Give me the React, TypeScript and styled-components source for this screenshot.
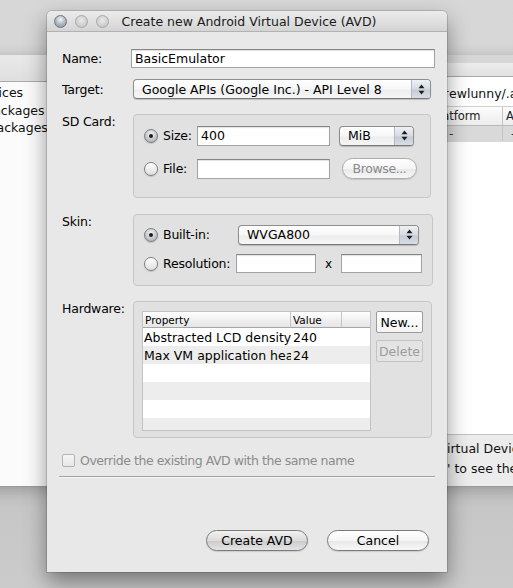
import React from 'react';
import styled, { createGlobalStyle } from 'styled-components';

const FONT = `'DejaVu Sans', 'Liberation Sans', sans-serif`;

const GlobalStyle = createGlobalStyle`
  html, body { margin: 0; padding: 0; }
  body { width: 513px; height: 588px; overflow: hidden; font-family: ${FONT}; background: #cccccc; }
  * { box-sizing: border-box; }
`;

const Desktop = styled.div`
  position: relative;
  width: 513px;
  height: 588px;
  overflow: hidden;
  font-family: ${FONT};
  font-size: 12.5px;
  background: linear-gradient(#d7d7d7 0, #d3d3d3 480px, #c6c6c6 500px, #cbcbcb 588px);
`;

/* ---------- background window (SDK manager) ---------- */
const BgWindow = styled.div`
  position: absolute;
  left: -95px;
  top: 55px;
  width: 660px;
  height: 432px;
  display: flex;
  box-shadow: 0 4px 14px rgba(0, 0, 0, 0.28);
  border-bottom: 1px solid #9a9a9a;
`;

const Sidebar = styled.div`
  width: 295px;
  flex: none;
  display: flex;
  flex-direction: column;
  background: #fbfbfb;
`;

const SidebarHead = styled.div`
  height: 27px;
  background: linear-gradient(#e9e9e9, #dfdfdf);
  border-bottom: 1px solid #a9a9a9;
`;

const SidebarList = styled.div`
  padding-top: 2px;
  display: flex;
  flex-direction: column;
`;

const SidebarItem = styled.div`
  height: 17.5px;
  line-height: 17.5px;
  padding-left: 24px;
  white-space: nowrap;
  color: #111;
`;

const MainPane = styled.div`
  flex: 1;
  min-width: 0;
  margin-top: 8px;
  display: flex;
  flex-direction: column;
  background: #e9e9e9;
`;

const MainHead = styled.div`
  height: 14px;
  background: linear-gradient(#ececec, #e2e2e2);
  border-bottom: 1px solid #a9a9a9;
`;

const MainContent = styled.div`
  flex: 1;
  background: #ffffff;
  display: flex;
  flex-direction: column;
`;

const ClipLine = styled.div<{ $h: number; $pt?: number; $cut: number }>`
  display: grid;
  grid-template-columns: ${(p) => p.$cut}px max-content;
  height: ${(p) => p.$h}px;
  padding-top: ${(p) => p.$pt || 0}px;
  align-items: center;
  white-space: nowrap;
  color: #111;
`;

const ClipPrefix = styled.span`
  overflow: hidden;
  text-align: right;
  direction: rtl;
`;

const BgTable = styled.div`
  display: flex;
  flex-direction: column;
`;

const BgRow = styled.div<{ $head?: boolean }>`
  display: grid;
  grid-template-columns: 110px 118px 75px 120px;
  height: ${(p) => (p.$head ? 20 : 16)}px;
  align-items: center;
  background: ${(p) => (p.$head ? 'linear-gradient(#fdfdfd, #ececec)' : '#d9d9d9')};
  border-bottom: 1px solid ${(p) => (p.$head ? '#b8b8b8' : '#d9d9d9')};
  border-top: ${(p) => (p.$head ? '1px solid #d0d0d0' : 'none')};
  font-size: ${(p) => (p.$head ? 11.5 : 12)}px;
  color: ${(p) => (p.$head ? '#222' : '#333')};
`;

const BgCell = styled.span<{ $pad: number }>`
  padding-left: ${(p) => p.$pad}px;
  border-right: 1px solid #c4c4c4;
  height: 100%;
  display: flex;
  align-items: center;
  white-space: nowrap;
  overflow: hidden;
`;

const Legend = styled.div`
  height: 52px;
  border-top: 1px solid #c2c2c2;
  background: #ececec;
  display: flex;
  flex-direction: column;
  padding-top: 3px;
`;

/* ---------- dialog ---------- */
const Dialog = styled.div`
  position: absolute;
  left: 47px;
  top: 11px;
  width: 400px;
  height: 561px;
  display: flex;
  flex-direction: column;
  background: #e8e8e8;
  border-radius: 5px 5px 0 0;
  box-shadow: 0 10px 22px rgba(0, 0, 0, 0.42), 0 0 0 1px rgba(0, 0, 0, 0.14);
  color: #000;
`;

const TitleBar = styled.div`
  height: 21px;
  display: grid;
  grid-template-columns: 1fr auto 1fr;
  align-items: center;
  padding-left: 7px;
  background: linear-gradient(#ececec, #d4d4d4);
  border-bottom: 1px solid #b2b2b2;
  border-radius: 5px 5px 0 0;
`;

const Lights = styled.div`
  display: flex;
  gap: 8px;
`;

const Light = styled.span<{ $first?: boolean }>`
  width: 13px;
  height: 13px;
  border-radius: 50%;
  border: 1px solid ${(p) => (p.$first ? '#6f7780' : '#a8a8a8')};
  background: ${(p) =>
    p.$first
      ? 'radial-gradient(circle at 50% 32%, #f4f6f8 0, #b5bdc5 45%, #848d96 100%)'
      : 'radial-gradient(circle at 50% 40%, #e9e9e9 0, #d0d0d0 60%, #bcbcbc 100%)'};
`;

const Title = styled.div`
  font-size: 12.5px;
  color: #1a1a1a;
  white-space: nowrap;
  margin-left: -3px;
`;

const Body = styled.div`
  flex: 1;
  display: flex;
  flex-direction: column;
  padding: 17px 16px 21px 15px;
`;

const FormRow = styled.div<{ $top?: number; $align?: string }>`
  display: grid;
  grid-template-columns: 71px 1fr;
  align-items: ${(p) => p.$align || 'center'};
  margin-top: ${(p) => p.$top || 0}px;
`;

const Label = styled.div`
  line-height: 15px;
  white-space: nowrap;
  letter-spacing: -0.2px;
`;

const TextField = styled.div<{ $w?: number; $h?: number }>`
  ${(p) => (p.$w ? `width: ${p.$w}px;` : '')}
  height: ${(p) => p.$h || 20}px;
  background: #fff;
  border: 1px solid #a3a3a3;
  border-top-color: #858585;
  box-shadow: inset 0 1px 1px rgba(0, 0, 0, 0.12);
  padding: 0 3px;
  display: flex;
  align-items: center;
  white-space: nowrap;
`;

const NameField = styled(TextField)`
  margin: 0 -4px 0 -2px;
`;

const PopUp = styled.div<{ $w?: number; $ml?: number }>`
  ${(p) => (p.$w ? `width: ${p.$w}px;` : '')}
  margin-left: ${(p) => p.$ml || 0}px;
  height: 20px;
  display: flex;
  border: 1px solid #8e8e8e;
  border-bottom-color: #777;
  border-radius: 4px;
  overflow: hidden;
  box-shadow: 0 1px 1px rgba(0, 0, 0, 0.18);
  background: linear-gradient(#ffffff, #f7f7f7 50%, #ededed 55%, #f6f6f6);
`;

const PopText = styled.span`
  flex: 1;
  padding-left: 8px;
  display: flex;
  align-items: center;
  white-space: nowrap;
  overflow: hidden;
`;

const PopArrows = styled.span`
  width: 19px;
  display: flex;
  align-items: center;
  justify-content: center;
  background: linear-gradient(#eef1f4, #d6dce3 50%, #c4ccd5 55%, #d9dee4);
  border-left: 1px solid #b4bac2;
`;

const Arrows = () => (
  <svg width="7" height="11" viewBox="0 0 7 11">
    <polygon points="0.5,4.2 3.5,0.5 6.5,4.2" fill="#1e1e1e" />
    <polygon points="0.5,6.8 3.5,10.5 6.5,6.8" fill="#1e1e1e" />
  </svg>
);

const Group = styled.div<{ $pad: string }>`
  background: #e1e1e1;
  border: 1px solid #c7c7c7;
  border-radius: 4px;
  padding: ${(p) => p.$pad};
  display: flex;
  flex-direction: column;
`;

const GroupRow = styled.div<{ $cols: string; $top?: number }>`
  display: grid;
  grid-template-columns: ${(p) => p.$cols};
  align-items: center;
  height: 21px;
  margin-top: ${(p) => p.$top || 0}px;
`;

const RadioLabel = styled.label`
  display: flex;
  align-items: center;
  gap: 5px;
  white-space: nowrap;
  letter-spacing: -0.2px;
`;

const Radio = styled.span<{ $on?: boolean }>`
  width: 14px;
  height: 14px;
  flex: none;
  border-radius: 50%;
  border: 1px solid #7e7e7e;
  display: flex;
  align-items: center;
  justify-content: center;
  background: ${(p) =>
    p.$on
      ? 'radial-gradient(circle at 50% 35%, #f4f5f7 0, #c3c8ce 55%, #9aa1a9 100%)'
      : 'linear-gradient(#ffffff, #ececec 60%, #dedede)'};
  box-shadow: 0 1px 1px rgba(0, 0, 0, 0.15);
  &::after {
    content: '';
    width: 4px;
    height: 4px;
    border-radius: 50%;
    background: #1c1c1c;
    display: ${(p) => (p.$on ? 'block' : 'none')};
  }
`;

const PillButton = styled.div<{ $w: number; $disabled?: boolean; $default?: boolean; $ml?: number }>`
  width: ${(p) => p.$w}px;
  height: 21px;
  margin-left: ${(p) => p.$ml || 0}px;
  border-radius: 11px;
  border: 1px solid ${(p) => (p.$disabled ? '#adadad' : '#7a7a7a')};
  display: flex;
  align-items: center;
  justify-content: center;
  white-space: nowrap;
  letter-spacing: ${(p) => (p.$disabled ? '-0.4px' : '0')};
  color: ${(p) => (p.$disabled ? '#8a8a8a' : '#000')};
  background: ${(p) =>
    p.$default
      ? 'linear-gradient(#f2f2f2, #dcdcdc 50%, #cdcdcd 55%, #e4e4e4)'
      : 'linear-gradient(#ffffff, #f5f5f5 50%, #e9e9e9 55%, #f7f7f7)'};
  box-shadow: 0 1px 1px rgba(0, 0, 0, 0.12);
`;

const Times = styled.span`
  text-align: center;
  font-size: 12px;
`;

const HardwareBox = styled.div`
  display: flex;
  gap: 5px;
`;

const Table = styled.div`
  width: 229px;
  height: 120px;
  overflow: hidden;
  background: #fff;
  border: 1px solid #c2c2c2;
  display: flex;
  flex-direction: column;
`;

const THead = styled.div`
  height: 16px;
  flex: none;
  display: grid;
  grid-template-columns: 148px 51px 1fr;
  background: linear-gradient(#ffffff, #f1f1f1 50%, #e6e6e6);
  border-bottom: 1px solid #a6a6a6;
  font-size: 10.5px;
`;

const TH = styled.span`
  padding-left: 2px;
  border-right: 1px solid #c4c4c4;
  display: flex;
  align-items: center;
  &:last-child { border-right: none; }
`;

const TRow = styled.div<{ $alt?: boolean }>`
  height: 18px;
  flex: none;
  display: grid;
  grid-template-columns: 148px 51px 1fr;
  background: ${(p) => (p.$alt ? '#ededed' : '#ffffff')};
`;

const TD = styled.span<{ $pad: number }>`
  padding-left: ${(p) => p.$pad}px;
  white-space: nowrap;
  overflow: hidden;
  display: flex;
  align-items: center;
`;

const SideButtons = styled.div`
  display: flex;
  flex-direction: column;
  gap: 7px;
`;

const SquareButton = styled.div<{ $disabled?: boolean }>`
  width: 47px;
  height: 22px;
  border: 1px solid ${(p) => (p.$disabled ? '#c3c3c3' : '#9b9b9b')};
  border-radius: 2px;
  display: flex;
  align-items: center;
  justify-content: center;
  color: ${(p) => (p.$disabled ? '#9c9c9c' : '#000')};
  background: ${(p) => (p.$disabled ? '#e4e4e4' : 'linear-gradient(#ffffff, #f4f4f4)')};
`;

const CheckRow = styled.label`
  display: flex;
  align-items: center;
  gap: 5px;
  height: 16px;
  margin-top: 14px;
  color: #8b8b8b;
  white-space: nowrap;
  letter-spacing: -0.45px;
`;

const CheckBox = styled.span`
  width: 13px;
  height: 13px;
  border: 1px solid #b3b3b3;
  border-radius: 2px;
  background: linear-gradient(#f7f7f7, #e6e6e6);
`;

const Separator = styled.div`
  margin: 8px -4px 0 -3px;
  height: 2px;
  border-top: 1px solid #a3a3a3;
  border-bottom: 1px solid #f6f6f6;
`;

const Spacer = styled.div`
  flex: 1;
`;

const ButtonBar = styled.div`
  display: flex;
  justify-content: flex-end;
  gap: 19px;
  padding-right: 2px;
`;

const hwRows: [string, string][] = [
  ['Abstracted LCD density', '240'],
  ['Max VM application heap size', '24'],
  ['', ''],
  ['', ''],
  ['', ''],
  ['', ''],
];

export default function App() {
  return (
    <>
      <GlobalStyle />
      <Desktop>
        <BgWindow>
          <Sidebar>
            <SidebarHead />
            <SidebarList>
              <SidebarItem>Virtual Devices</SidebarItem>
              <SidebarItem>Installed Packages</SidebarItem>
              <SidebarItem>Available Packages</SidebarItem>
            </SidebarList>
          </Sidebar>
          <MainPane>
            <MainHead />
            <MainContent>
              <ClipLine $h={29} $pt={4} $cut={249}>
                <ClipPrefix>
                  <bdi>List of existing Android Virtual Devices located at /Users/andr</bdi>
                </ClipPrefix>
                <span>ewlunny/.android/avd</span>
              </ClipLine>
              <BgTable>
                <BgRow $head>
                  <BgCell $pad={4}>AVD Name</BgCell>
                  <BgCell $pad={4}>Target Name</BgCell>
                  <BgCell $pad={4}>Platform</BgCell>
                  <BgCell $pad={3}>API Level</BgCell>
                </BgRow>
                <BgRow>
                  <BgCell $pad={4}>No AVD available</BgCell>
                  <BgCell $pad={4}>-</BgCell>
                  <BgCell $pad={21}>-</BgCell>
                  <BgCell $pad={8}>-</BgCell>
                </BgRow>
              </BgTable>
            </MainContent>
            <Legend>
              <ClipLine $h={20} $cut={247}>
                <ClipPrefix>
                  <bdi>✓ A valid Android V</bdi>
                </ClipPrefix>
                <span>irtual Device.</span>
              </ClipLine>
              <ClipLine $h={20} $cut={247}>
                <ClipPrefix>
                  <bdi>✗ An Android Virtual Device that failed to load. Click 'Details</bdi>
                </ClipPrefix>
                <span>' to see the error.</span>
              </ClipLine>
            </Legend>
          </MainPane>
        </BgWindow>

        <Dialog>
          <TitleBar>
            <Lights>
              <Light $first />
              <Light />
              <Light />
            </Lights>
            <Title>Create new Android Virtual Device (AVD)</Title>
            <span />
          </TitleBar>
          <Body>
            <FormRow>
              <Label>Name:</Label>
              <NameField $h={19}>BasicEmulator</NameField>
            </FormRow>
            <FormRow $top={11}>
              <Label>Target:</Label>
              <PopUp>
                <PopText>Google APIs (Google Inc.) - API Level 8</PopText>
                <PopArrows>
                  <Arrows />
                </PopArrows>
              </PopUp>
            </FormRow>
            <FormRow $top={15} $align="start">
              <Label>SD Card:</Label>
              <Group $pad="10px 10px 18px 10px">
                <GroupRow $cols="53px 133px auto">
                  <RadioLabel>
                    <Radio $on />
                    Size:
                  </RadioLabel>
                  <TextField>400</TextField>
                  <PopUp $w={75} $ml={9}>
                    <PopText>MiB</PopText>
                    <PopArrows>
                      <Arrows />
                    </PopArrows>
                  </PopUp>
                </GroupRow>
                <GroupRow $cols="53px 133px auto" $top={12}>
                  <RadioLabel>
                    <Radio />
                    File:
                  </RadioLabel>
                  <TextField />
                  <PillButton $w={75} $ml={12} $disabled>
                    Browse...
                  </PillButton>
                </GroupRow>
              </Group>
            </FormRow>
            <FormRow $top={16} $align="start">
              <Label>Skin:</Label>
              <Group $pad="9px 10px 11px 10px">
                <GroupRow $cols="94px 181px">
                  <RadioLabel>
                    <Radio $on />
                    Built-in:
                  </RadioLabel>
                  <PopUp>
                    <PopText>WVGA800</PopText>
                    <PopArrows>
                      <Arrows />
                    </PopArrows>
                  </PopUp>
                </GroupRow>
                <GroupRow $cols="92px 80px 25px 81px" $top={8}>
                  <RadioLabel>
                    <Radio />
                    Resolution:
                  </RadioLabel>
                  <TextField $h={19} />
                  <Times>x</Times>
                  <TextField $h={19} />
                </GroupRow>
              </Group>
            </FormRow>
            <FormRow $top={15} $align="start">
              <Label>Hardware:</Label>
              <Group $pad="9px 8px 6px 8px">
                <HardwareBox>
                  <Table>
                    <THead>
                      <TH>Property</TH>
                      <TH>Value</TH>
                      <TH />
                    </THead>
                    {hwRows.map(([k, v], i) => (
                      <TRow key={i} $alt={i % 2 === 1}>
                        <TD $pad={1}>{k}</TD>
                        <TD $pad={2}>{v}</TD>
                        <TD $pad={0} />
                      </TRow>
                    ))}
                  </Table>
                  <SideButtons>
                    <SquareButton>New...</SquareButton>
                    <SquareButton $disabled>Delete</SquareButton>
                  </SideButtons>
                </HardwareBox>
              </Group>
            </FormRow>
            <CheckRow>
              <CheckBox />
              Override the existing AVD with the same name
            </CheckRow>
            <Separator />
            <Spacer />
            <ButtonBar>
              <PillButton $w={102} $default>
                Create AVD
              </PillButton>
              <PillButton $w={102}>Cancel</PillButton>
            </ButtonBar>
          </Body>
        </Dialog>
      </Desktop>
    </>
  );
}
